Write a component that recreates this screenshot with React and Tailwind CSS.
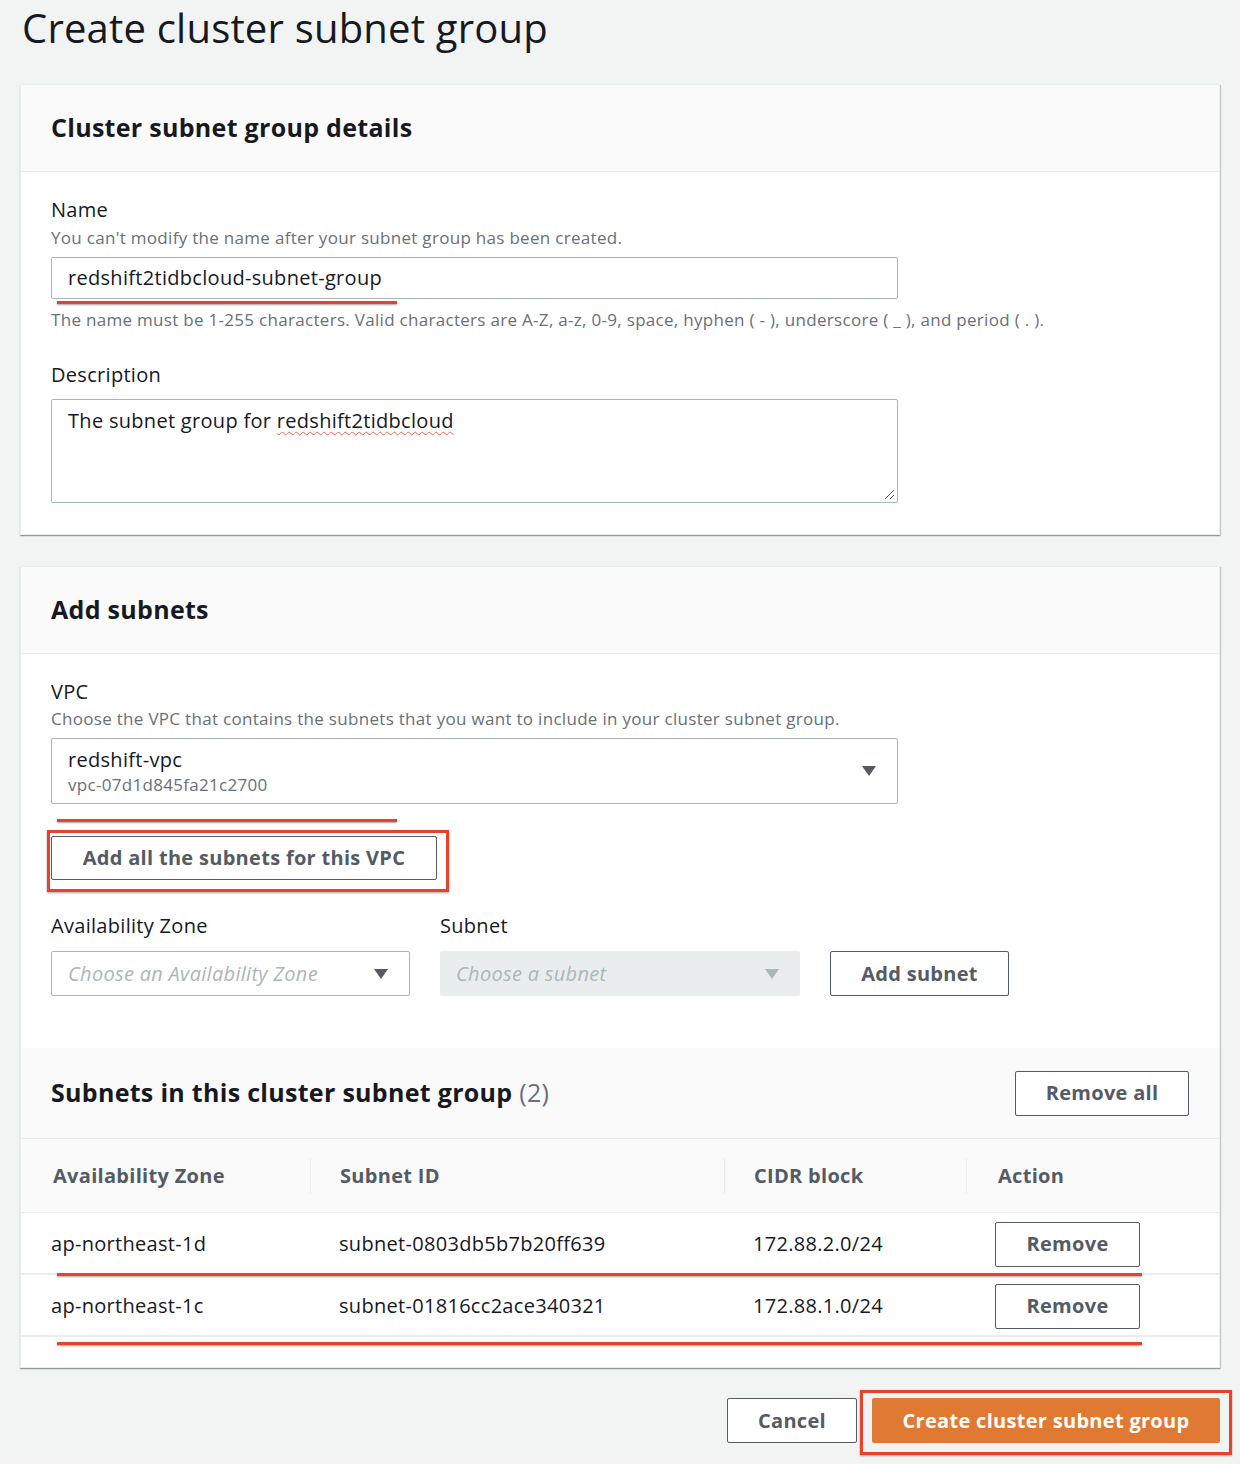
import React from 'react'

const font = { fontFamily: '"Open Sans", "Noto Sans", sans-serif' }

const Caret = ({ disabled }) => (
  <svg width="16" height="12" viewBox="0 0 16 12" className="shrink-0">
    <path d="M1 1h14L8 11z" fill={disabled ? '#aab7b8' : '#545b64'} />
  </svg>
)

const Btn = ({ children, className = '' }) => (
  <button className={`border border-[#545b64] rounded-[2px] bg-white text-[#545b64] font-bold text-[20px] tracking-[0.3px] ${className}`}>
    {children}
  </button>
)

const Card = ({ title, children, className = '' }) => (
  <section className={`bg-white border border-[#eaeded] shadow-[0_1px_1px_0_rgba(0,28,36,0.3),1px_1px_1px_0_rgba(0,28,36,0.15)] ${className}`}>
    <div className="h-[87px] flex items-center px-[30px] bg-[#fafafa] border-b border-[#eaeded]">
      <h2 className="text-[25px] tracking-[0.3px] font-bold text-[#16191f]">{title}</h2>
    </div>
    {children}
  </section>
)

const rows = [
  ['ap-northeast-1d', 'subnet-0803db5b7b20ff639', '172.88.2.0/24'],
  ['ap-northeast-1c', 'subnet-01816cc2ace340321', '172.88.1.0/24'],
]

export default function App() {
  return (
    <div style={font} className="relative w-[1240px] min-h-[1464px] bg-[#f2f3f3] px-5 text-[#16191f] tracking-[0.3px]">
      <h1 className="pt-[4px] h-[54px] pl-[2px] text-[40px] leading-[48px] tracking-[0.2px] text-[#16191f]">Create cluster subnet group</h1>

      <Card title="Cluster subnet group details" className="mt-[30px]">
        <div className="px-[30px] pt-[25px] pb-[31px]">
          <div className="text-[20px] leading-[26px]">Name</div>
          <div className="text-[17px] leading-[24px] text-[#687078] mt-[3px]">You can't modify the name after your subnet group has been created.</div>
          <div className="mt-[7px] w-[847px] h-[42px] border border-[#aab7b8] rounded-[2px] flex items-center px-4 text-[20px]">redshift2tidbcloud-subnet-group</div>
          <div className="mt-[9px] text-[17px] leading-[24px] text-[#687078]">The name must be 1-255 characters. Valid characters are A-Z, a-z, 0-9, space, hyphen ( - ), underscore ( _ ), and period ( . ).</div>
          <div className="mt-[30px] text-[20px] leading-[26px]">Description</div>
          <div className="relative mt-[11px] w-[847px] h-[104px] border border-[#aab7b8] rounded-[2px] px-4 pt-[7px] text-[20px] leading-[28px]">
            The subnet group for{' '}
            <span className="underline decoration-wavy decoration-[#e26b5a] decoration-1 underline-offset-[3px]">redshift2tidbcloud</span>
            <svg width="12" height="12" viewBox="0 0 12 12" className="absolute right-[2px] bottom-[2px]">
              <path d="M11 2L2 11M11 7L7 11" stroke="#545b64" strokeWidth="1" />
            </svg>
          </div>
        </div>
      </Card>

      <Card title="Add subnets" className="mt-[31px]">
        <div className="px-[30px] pt-[25px] pb-[52px]">
          <div className="text-[20px] leading-[26px]">VPC</div>
          <div className="text-[17px] leading-[24px] text-[#687078] mt-[2px]">Choose the VPC that contains the subnets that you want to include in your cluster subnet group.</div>
          <div className="mt-[7px] w-[847px] h-[66px] border border-[#aab7b8] rounded-[2px] flex items-center justify-between pl-4 pr-[20px]">
            <div className="pt-[2px]">
              <div className="text-[20px] leading-[26px]">redshift-vpc</div>
              <div className="text-[17px] leading-[24px] text-[#687078]">vpc-07d1d845fa21c2700</div>
            </div>
            <Caret />
          </div>
          <Btn className="mt-[32px] w-[386px] h-[44px]">Add all the subnets for this VPC</Btn>
          <div className="mt-[33px] flex items-end gap-[30px]">
            <div className="w-[359px]">
              <div className="text-[20px] leading-[26px]">Availability Zone</div>
              <div className="mt-[12px] h-[45px] border border-[#aab7b8] rounded-[2px] flex items-center justify-between pl-4 pr-[20px]">
                <span className="italic text-[20px] text-[#aab7b8]">Choose an Availability Zone</span>
                <Caret />
              </div>
            </div>
            <div className="w-[360px]">
              <div className="text-[20px] leading-[26px]">Subnet</div>
              <div className="mt-[12px] h-[45px] bg-[#eaeded] rounded-[2px] flex items-center justify-between pl-4 pr-[20px]">
                <span className="italic text-[20px] text-[#aab7b8]">Choose a subnet</span>
                <Caret disabled />
              </div>
            </div>
            <Btn className="w-[179px] h-[45px]">Add subnet</Btn>
          </div>
        </div>

        <div className="h-[91px] bg-[#fafafa] border-b border-[#eaeded] flex items-center justify-between pl-[30px] pr-[30px]">
          <h2 className="text-[25px] font-bold">
            Subnets in this cluster subnet group <span className="font-normal text-[#687078]">(2)</span>
          </h2>
          <Btn className="w-[174px] h-[45px]">Remove all</Btn>
        </div>
        <div className="grid grid-cols-[289px_414px_242px_1fr] h-[74px] bg-[#fafafa] border-b border-[#eaeded] items-center text-[20px] font-bold text-[#545b64]">
          <div className="pl-[32px]">Availability Zone</div>
          <div className="pl-[29px] border-l border-[#eaeded] h-[36px] flex items-center">Subnet ID</div>
          <div className="pl-[29px] border-l border-[#eaeded] h-[36px] flex items-center">CIDR block</div>
          <div className="pl-[31px] border-l border-[#eaeded] h-[36px] flex items-center">Action</div>
        </div>
        {rows.map((r) => (
          <div key={r[0]} className="grid grid-cols-[289px_414px_242px_1fr] h-[62px] pt-[2px] border-b-2 border-[#eaeded] items-center text-[20px]">
            <div className="pl-[30px]">{r[0]}</div>
            <div className="pl-[29px]">{r[1]}</div>
            <div className="pl-[29px]">{r[2]}</div>
            <div className="pl-[29px]">
              <Btn className="w-[145px] h-[45px]">Remove</Btn>
            </div>
          </div>
        ))}
        <div className="h-[30px]" />
      </Card>

      <div className="mt-[30px] flex justify-end gap-[15px]">
        <Btn className="w-[130px] h-[45px]">Cancel</Btn>
        <button className="w-[348px] h-[45px] rounded-[2px] bg-[#e07a32] text-white font-bold text-[20px] tracking-[0.3px]">Create cluster subnet group</button>
      </div>

      {/* red annotation marks */}
      <div className="absolute left-[57px] top-[301px] w-[340px] h-[3px] bg-[#e8412c] shadow-[0_1px_2px_rgba(0,0,0,0.35)]" />
      <div className="absolute left-[57px] top-[819px] w-[340px] h-[3px] bg-[#e8412c] shadow-[0_1px_2px_rgba(0,0,0,0.35)]" />
      <div className="absolute left-[47px] top-[830px] w-[402px] h-[62px] border-[3px] border-[#e8412c] shadow-[0_1px_2px_rgba(0,0,0,0.35)]" />
      <div className="absolute left-[57px] top-[1273px] w-[1085px] h-[3px] bg-[#e8412c] shadow-[0_1px_2px_rgba(0,0,0,0.35)]" />
      <div className="absolute left-[57px] top-[1342px] w-[1085px] h-[3px] bg-[#e8412c] shadow-[0_1px_2px_rgba(0,0,0,0.35)]" />
      <div className="absolute left-[860px] top-[1390px] w-[372px] h-[65px] border-[3px] border-[#e8412c] shadow-[0_1px_2px_rgba(0,0,0,0.35)]" />
    </div>
  )
}
